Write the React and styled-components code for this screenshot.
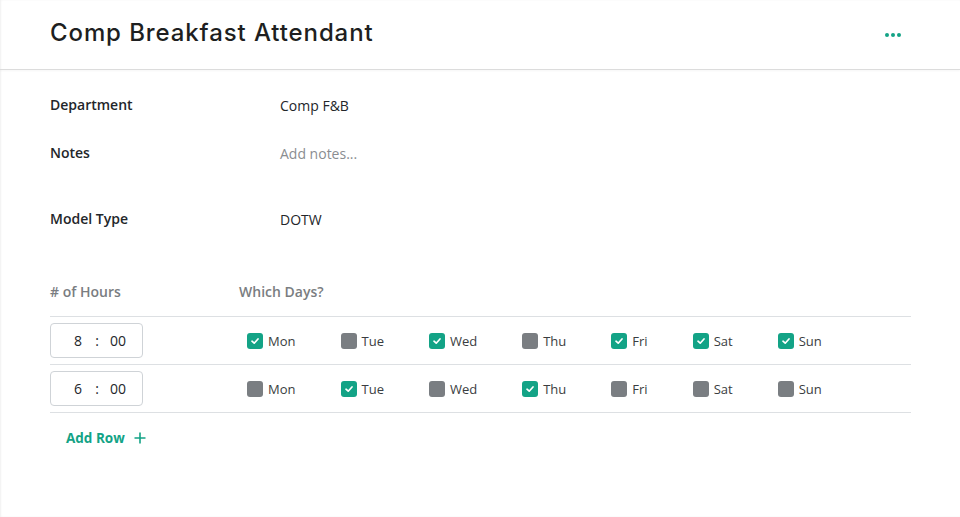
import React, { useState } from "react";
import styled, { createGlobalStyle } from "styled-components";

const GlobalStyle = createGlobalStyle`
  html, body {
    margin: 0;
    padding: 0;
    background: #fff;
  }
  body {
    font-family: "Open Sans", "Noto Sans", sans-serif;
    color: #23262a;
  }
`;

const Page = styled.div`
  width: 960px;
  height: 517px;
  background: #fff;
  box-shadow: inset 1px 0 2px rgba(0, 0, 0, 0.06);
`;

const Header = styled.div`
  height: 70px;
  border-bottom: 1px solid #dcdcdc;
  box-shadow: 0 1px 2px rgba(0, 0, 0, 0.04);
  display: flex;
  align-items: center;
  justify-content: space-between;
  padding: 0 59px 0 50px;
  box-sizing: border-box;
`;

const Title = styled.h1`
  margin: 0;
  margin-top: -4px;
  font-family: "Inter", "Lato", sans-serif;
  font-size: 24px;
  font-weight: 500;
  color: #1e1f21;
  letter-spacing: 0.9px;
`;

const MoreButton = styled.button`
  border: none;
  background: none;
  padding: 0;
  display: flex;
  gap: 2px;
  cursor: pointer;
`;

const Dot = styled.span`
  width: 4px;
  height: 4px;
  border-radius: 50%;
  background: #13a386;
`;

const Body = styled.div`
  padding: 22px 49px 0 50px;
`;

const Field = styled.div`
  display: grid;
  grid-template-columns: 230px 1fr;
  align-items: center;
  height: 24px;
  margin-bottom: ${(p) => p.gap}px;
`;

const Label = styled.div`
  font-size: 14px;
  font-weight: 600;
  color: #23262a;
`;

const Value = styled.div`
  font-size: 14px;
  color: ${(p) => (p.placeholder ? "#8a8d91" : "#23262a")};
  padding-top: 2px;
`;

const TableHead = styled.div`
  display: grid;
  grid-template-columns: 189px 1fr;
  margin-top: 51px;
  height: 36px;
  border-bottom: 1px solid #dde0e3;
  font-size: 14px;
  font-weight: 600;
  color: #7a7d81;
  padding-top: 1px;
  box-sizing: border-box;
`;

const Row = styled.div`
  display: grid;
  grid-template-columns: 197px 1fr;
  align-items: center;
  height: 48px;
  border-bottom: 1px solid #dde0e3;
  box-sizing: border-box;
`;

const TimeBox = styled.div`
  width: 93px;
  height: 35px;
  box-sizing: border-box;
  border: 1px solid #cfd3d7;
  border-radius: 4px;
  display: flex;
  align-items: center;
  font-size: 14px;
  color: #23262a;
  padding-left: 21px;
`;

const TimePart = styled.span`
  width: ${(p) => p.w}px;
  text-align: center;
`;

const Days = styled.div`
  display: flex;
  gap: 45px;
`;

const Day = styled.label`
  display: flex;
  align-items: center;
  gap: 5px;
  font-size: 13px;
  color: #3a3d41;
  cursor: pointer;
`;

const Box = styled.span`
  width: 16px;
  height: 16px;
  border-radius: 3px;
  background: ${(p) => (p.checked ? "#13a386" : "#7a7e82")};
  display: flex;
  align-items: center;
  justify-content: center;
`;

const AddRow = styled.button`
  border: none;
  background: none;
  margin: 16px 0 0 16px;
  padding: 0;
  display: flex;
  align-items: center;
  gap: 9px;
  font-family: "Open Sans", "Noto Sans", sans-serif;
  font-size: 13.5px;
  font-weight: 700;
  color: #13a386;
  cursor: pointer;
`;

const DAYS = ["Mon", "Tue", "Wed", "Thu", "Fri", "Sat", "Sun"];

const Check = () => (
  <svg width="10" height="10" viewBox="0 0 10 10">
    <path d="M2 5.2 L4.2 7.2 L8 3" fill="none" stroke="#fff" strokeWidth="1.7" strokeLinecap="round" strokeLinejoin="round" />
  </svg>
);

export default function App() {
  const [rows, setRows] = useState([
    { h: "8", m: "00", days: [1, 0, 1, 0, 1, 1, 1] },
    { h: "6", m: "00", days: [0, 1, 0, 1, 0, 0, 0] },
  ]);

  const toggle = (ri, di) => {
    setRows(
      rows.map((r, i) =>
        i === ri ? { ...r, days: r.days.map((d, j) => (j === di ? (d ? 0 : 1) : d)) } : r
      )
    );
  };

  return (
    <>
      <GlobalStyle />
      <Page>
        <Header>
          <Title>Comp Breakfast Attendant</Title>
          <MoreButton>
            <Dot />
            <Dot />
            <Dot />
          </MoreButton>
        </Header>
        <Body>
          <Field gap={24}>
            <Label>Department</Label>
            <Value>Comp F&amp;B</Value>
          </Field>
          <Field gap={42}>
            <Label>Notes</Label>
            <Value placeholder="1">Add notes...</Value>
          </Field>
          <Field gap={0}>
            <Label>Model Type</Label>
            <Value>DOTW</Value>
          </Field>

          <TableHead>
            <div># of Hours</div>
            <div>Which Days?</div>
          </TableHead>
          {rows.map((r, ri) => (
            <Row key={ri}>
              <TimeBox>
                <TimePart w={12}>{r.h}</TimePart>
                <TimePart w={26}>:</TimePart>
                <TimePart w={16}>{r.m}</TimePart>
              </TimeBox>
              <Days>
                {DAYS.map((d, di) => (
                  <Day key={d} onClick={() => toggle(ri, di)}>
                    <Box checked={!!r.days[di]}>{r.days[di] ? <Check /> : null}</Box>
                    {d}
                  </Day>
                ))}
              </Days>
            </Row>
          ))}
          <AddRow onClick={() => setRows([...rows, { h: "0", m: "00", days: [0, 0, 0, 0, 0, 0, 0] }])}>
            Add Row
            <svg width="12" height="12" viewBox="0 0 12 12">
              <path d="M6 0.5 V11.5 M0.5 6 H11.5" stroke="#13a386" strokeWidth="1.6" />
            </svg>
          </AddRow>
        </Body>
      </Page>
    </>
  );
}
